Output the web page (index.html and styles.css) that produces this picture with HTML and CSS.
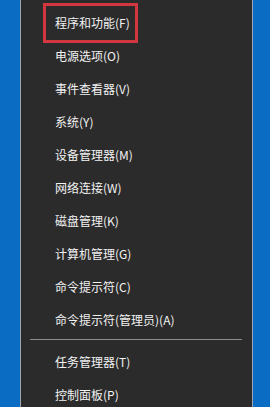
FILE: index.html
```html
<!DOCTYPE html>
<html lang="zh-CN">
<head>
<meta charset="utf-8">
<link rel="stylesheet" href="styles.css">
</head>
<body>
<div class="desk">
  <div class="menu">
    <div class="item first"><span class="mark"></span>程序和功能(F)</div>
    <div class="item">电源选项(O)</div>
    <div class="item">事件查看器(V)</div>
    <div class="item">系统(Y)</div>
    <div class="item">设备管理器(M)</div>
    <div class="item">网络连接(W)</div>
    <div class="item">磁盘管理(K)</div>
    <div class="item">计算机管理(G)</div>
    <div class="item">命令提示符(C)</div>
    <div class="item">命令提示符(管理员)(A)</div>
    <div class="sep"></div>
    <div class="item">任务管理器(T)</div>
    <div class="item">控制面板(P)</div>
  </div>
</div>
</body>
</html>
```
FILE: styles.css
```css
html, body {
  margin: 0;
  padding: 0;
  background: #0a6cc2;
  overflow: hidden;
}
.desk {
  width: 270px;
  height: 407px;
  padding-left: 20px;
  box-sizing: border-box;
}
.menu {
  width: 233px;
  height: 407px;
  box-sizing: border-box;
  background: #2b2b2b;
  border-left: 1px solid #9aa6b2;
  border-right: 1px solid #9aa6b2;
  padding-top: 6px;
  font-family: "Microsoft YaHei", "Noto Sans CJK SC", "Liberation Sans", sans-serif;
  font-size: 12px;
  color: #f2f2f2;
}
.item {
  height: 33px;
  line-height: 33px;
  padding-left: 34px;
  white-space: nowrap;
  position: relative;
}
.mark {
  position: absolute;
  left: 22px;
  top: -3px;
  width: 95px;
  height: 40px;
  box-sizing: border-box;
  border: 3px solid #d2373f;
}
.sep {
  height: 1px;
  background: #8c8c8c;
  margin: 3px 10px 5px 9px;
}
```
